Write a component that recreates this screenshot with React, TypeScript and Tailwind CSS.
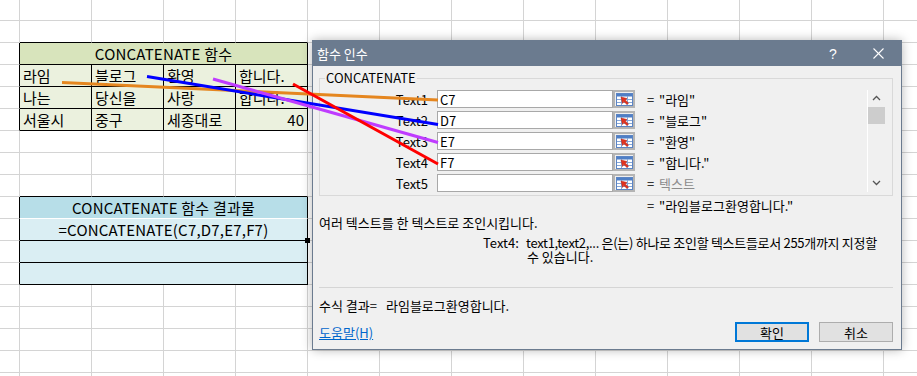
import React from "react";

function Plain() {
  return <div className="h-[22px] w-[72px] shrink-0 border-r border-b border-[#d4d4d4]" />;
}
function PlainCols({ n }: { n: number }) {
  return (
    <>
      {Array.from({ length: n }).map((_, i) => (
        <Plain key={i} />
      ))}
    </>
  );
}
function Col0({ black }: { black?: boolean }) {
  return (
    <div
      className={
        black
          ? "h-[22px] w-[20px] shrink-0 border-r border-b border-b-[#d4d4d4] border-r-black"
          : "h-[22px] w-[20px] shrink-0 border-r border-b border-[#d4d4d4]"
      }
    />
  );
}
function TopEdge() {
  return <div className="h-[22px] w-[72px] shrink-0 border-r border-b border-r-[#d4d4d4] border-b-black" />;
}
function GreenCell({ children, right, marquee }: { children?: React.ReactNode; right?: boolean; marquee?: boolean }) {
  return (
    <div
      className={
        "relative flex h-[22px] w-[72px] shrink-0 items-center border-r border-b border-black bg-[#ebf1de] px-[3px] text-[15px] leading-none text-black " +
        (right ? "justify-end" : "justify-start")
      }
    >
      {children}
      {marquee && (
        <div className="absolute -left-px -top-px -right-px -bottom-px border border-dashed border-black" />
      )}
    </div>
  );
}

function Row({ children }: { children: React.ReactNode }) {
  return <div className="flex h-[22px]">{children}</div>;
}

function RefIcon() {
  return (
    <svg width="17" height="13" viewBox="0 0 17 13">
      <rect x="0.5" y="0.5" width="16" height="12" fill="#ffffff" stroke="#5b84c4" />
      <rect x="1" y="1" width="15" height="2.5" fill="#4f7fc6" />
      <line x1="1" y1="6.5" x2="16" y2="6.5" stroke="#86a6d6" />
      <line x1="1" y1="9.5" x2="16" y2="9.5" stroke="#86a6d6" />
      <line x1="5.5" y1="3" x2="5.5" y2="12" stroke="#86a6d6" />
      <line x1="11.5" y1="3" x2="11.5" y2="12" stroke="#86a6d6" />
      <polygon points="5,4 11,5.5 9.2,7 12.5,10 11,11.5 7.8,8.5 6.5,10.5" fill="#e2321f" stroke="#b8200f" strokeWidth="0.5" />
    </svg>
  );
}

function ArgRow({ label, cell, value, gray }: { label: string; cell: string; value: string; gray?: boolean }) {
  return (
    <div className="flex h-[18px] items-center">
      <div className="w-[108px] text-right text-[13px] leading-none text-black">{label}</div>
      <div className="ml-[9px] flex h-[18px] w-[176px] items-center border border-[#a8a8a8] bg-white pl-[2px] text-[13px] leading-none text-black">
        {cell}
      </div>
      <div className="flex h-[18px] w-[22px] items-center justify-center border-2 border-[#b4b4b4] bg-[#efefef]">
        <RefIcon />
      </div>
      <div className="ml-[12px] w-[12px] text-[13px] leading-none text-black">=</div>
      <div className={"text-[13px] leading-none " + (gray ? "text-[#8c8c8c]" : "text-black")}>{value}</div>
    </div>
  );
}

export default function App() {
  return (
    <div className="relative h-[376px] w-[917px] overflow-hidden bg-white font-['Noto_Sans_CJK_KR',sans-serif]">
      {/* spreadsheet */}
      <div className="-mt-px flex flex-col">
        <Row>
          <Col0 />
          <PlainCols n={13} />
        </Row>
        <Row>
          <Col0 />
          <TopEdge />
          <TopEdge />
          <TopEdge />
          <TopEdge />
          <PlainCols n={9} />
        </Row>
        <Row>
          <Col0 black />
          <div className="flex h-[22px] w-[288px] shrink-0 items-center justify-center border-r border-b border-black bg-[#d8e4bc] text-[15px] leading-none tracking-[0.2px] text-black">
            CONCATENATE 함수
          </div>
          <PlainCols n={9} />
        </Row>
        <Row>
          <Col0 black />
          <GreenCell>라임</GreenCell>
          <GreenCell>블로그</GreenCell>
          <GreenCell>환영</GreenCell>
          <GreenCell marquee>합니다.</GreenCell>
          <PlainCols n={9} />
        </Row>
        <Row>
          <Col0 black />
          <GreenCell>나는</GreenCell>
          <GreenCell>당신을</GreenCell>
          <GreenCell>사랑</GreenCell>
          <GreenCell>합니다.</GreenCell>
          <PlainCols n={9} />
        </Row>
        <Row>
          <Col0 black />
          <GreenCell>서울시</GreenCell>
          <GreenCell>중구</GreenCell>
          <GreenCell>세종대로</GreenCell>
          <GreenCell right>40</GreenCell>
          <PlainCols n={9} />
        </Row>
        <Row>
          <Col0 />
          <PlainCols n={13} />
        </Row>
        <Row>
          <Col0 />
          <PlainCols n={13} />
        </Row>
        <Row>
          <Col0 />
          <TopEdge />
          <TopEdge />
          <TopEdge />
          <TopEdge />
          <PlainCols n={9} />
        </Row>
        <Row>
          <Col0 black />
          <div className="flex h-[22px] w-[288px] shrink-0 items-center justify-center border-r border-b border-r-black border-b-white bg-[#b7dee8] text-[15px] leading-none tracking-[0.2px] text-black">
            CONCATENATE 함수 결과물
          </div>
          <PlainCols n={9} />
        </Row>
        <Row>
          <Col0 black />
          <div className="relative flex h-[22px] w-[288px] shrink-0 items-center justify-center border-r border-b border-black bg-[#daeef3] text-[15px] leading-none tracking-[0.2px] text-black">
            =CONCATENATE(C7,D7,E7,F7)
            <div className="absolute -right-[3px] -bottom-[3px] h-[5px] w-[5px] bg-black" />
          </div>
          <PlainCols n={9} />
        </Row>
        <Row>
          <Col0 black />
          <div className="h-[22px] w-[288px] shrink-0 border-r border-b border-black bg-[#daeef3]" />
          <PlainCols n={9} />
        </Row>
        <Row>
          <Col0 black />
          <div className="h-[22px] w-[288px] shrink-0 border-r border-b border-black bg-[#daeef3]" />
          <PlainCols n={9} />
        </Row>
        {[0, 1, 2, 3, 4].map((i) => (
          <Row key={i}>
            <Col0 />
            <PlainCols n={13} />
          </Row>
        ))}
      </div>

      {/* dialog window */}
      <div className="absolute left-[312px] top-[40px] flex h-[310px] w-[590px] flex-col border border-[#6b7b8f] bg-[#f0f0f0] shadow-[0_0_10px_rgba(0,0,0,0.28)]">
        <div className="flex h-[25px] shrink-0 items-center bg-[#6b7b8f] text-white">
          <div className="pl-[4px] text-[13px] leading-none">함수 인수</div>
          <div className="flex-1" />
          <div className="flex w-[20px] justify-center text-[14px] leading-none font-['Liberation_Sans',sans-serif]">?</div>
          <div className="ml-[12px] flex h-[25px] w-[46px] items-center justify-center">
            <svg width="11" height="11" viewBox="0 0 11 11">
              <line x1="0.5" y1="0.5" x2="10.5" y2="10.5" stroke="#ffffff" strokeWidth="1.1" />
              <line x1="10.5" y1="0.5" x2="0.5" y2="10.5" stroke="#ffffff" strokeWidth="1.1" />
            </svg>
          </div>
        </div>

        <div className="flex flex-1 flex-col pl-[6px] text-black">
          {/* group box */}
          <div className="relative mt-[12px] flex h-[118px] w-[574px] border border-[#d9d9d9]">
            <div className="absolute left-[5px] -top-[9px] bg-[#f0f0f0] px-px text-[13px] leading-[16px]">CONCATENATE</div>
            <div className="flex flex-1 flex-col gap-[3px] pt-[11px]">
              <ArgRow label="Text1" cell="C7" value={'"라임"'} />
              <ArgRow label="Text2" cell="D7" value={'"블로그"'} />
              <ArgRow label="Text3" cell="E7" value={'"환영"'} />
              <ArgRow label="Text4" cell="F7" value={'"합니다."'} />
              <ArgRow label="Text5" cell="" value="텍스트" gray />
            </div>
            <div className="mr-[7px] mt-[11px] flex h-[102px] w-[18px] flex-col items-center border-l border-white">
              <svg className="mt-[5px]" width="9" height="6" viewBox="0 0 9 6">
                <polyline points="1,5 4.5,1.5 8,5" fill="none" stroke="#555555" strokeWidth="1.3" />
              </svg>
              <div className="mt-[6px] h-[17px] w-[17px] bg-[#cdcdcd]" />
              <div className="flex-1" />
              <svg className="mb-[6px]" width="9" height="6" viewBox="0 0 9 6">
                <polyline points="1,1 4.5,4.5 8,1" fill="none" stroke="#555555" strokeWidth="1.3" />
              </svg>
            </div>
          </div>

          <div className="flex h-[18px] items-center pl-[328px] text-[13px] leading-none">
            <div className="w-[12px]">=</div>
            <div>"라임블로그환영합니다."</div>
          </div>
          <div className="flex h-[16px] items-center text-[13px] leading-none">여러 텍스트를 한 텍스트로 조인시킵니다.</div>
          <div className="ml-[164px] mt-[6px] flex text-[13px] leading-[14px]">
            <div className="w-[43px]">Text4:</div>
            <div className="flex flex-col whitespace-nowrap">
              <div className="tracking-[-0.3px]">text1,text2,... 은(는) 하나로 조인할 텍스트들로서 255개까지 지정할</div>
              <div className="pl-px">수 있습니다.</div>
            </div>
          </div>
          <div className="mt-[23px] w-[574px] border-t border-[#d5d5d5]" />
          <div className="mt-[8px] flex h-[18px] items-center text-[13px] leading-none">
            <div>수식 결과=</div>
            <div className="ml-[9px]">라임블로그환영합니다.</div>
          </div>
          <div className="mt-[8px] flex w-[574px] items-center">
            <div className="text-[13px] leading-none text-[#0066cc] underline">도움말(H)</div>
            <div className="flex-1" />
            <div className="flex h-[20px] w-[74px] items-center justify-center border-2 border-[#0078d7] bg-[#e1e1e1] text-[13px] leading-none">
              확인
            </div>
            <div className="ml-[10px] flex h-[20px] w-[74px] items-center justify-center border border-[#adadad] bg-[#e1e1e1] text-[13px] leading-none">
              취소
            </div>
          </div>
        </div>
      </div>

      {/* annotation lines */}
      <svg className="pointer-events-none absolute left-0 top-0" width="917" height="376" viewBox="0 0 917 376">
        <line x1="62" y1="82.5" x2="438" y2="100" stroke="#e5861f" strokeWidth="3" />
        <line x1="147" y1="76.5" x2="438" y2="124.5" stroke="#0000ff" strokeWidth="3" />
        <line x1="213" y1="79" x2="438" y2="142.5" stroke="#bf3cff" strokeWidth="3" />
        <line x1="293" y1="84" x2="438" y2="164" stroke="#ff0000" strokeWidth="3" />
      </svg>
    </div>
  );
}
